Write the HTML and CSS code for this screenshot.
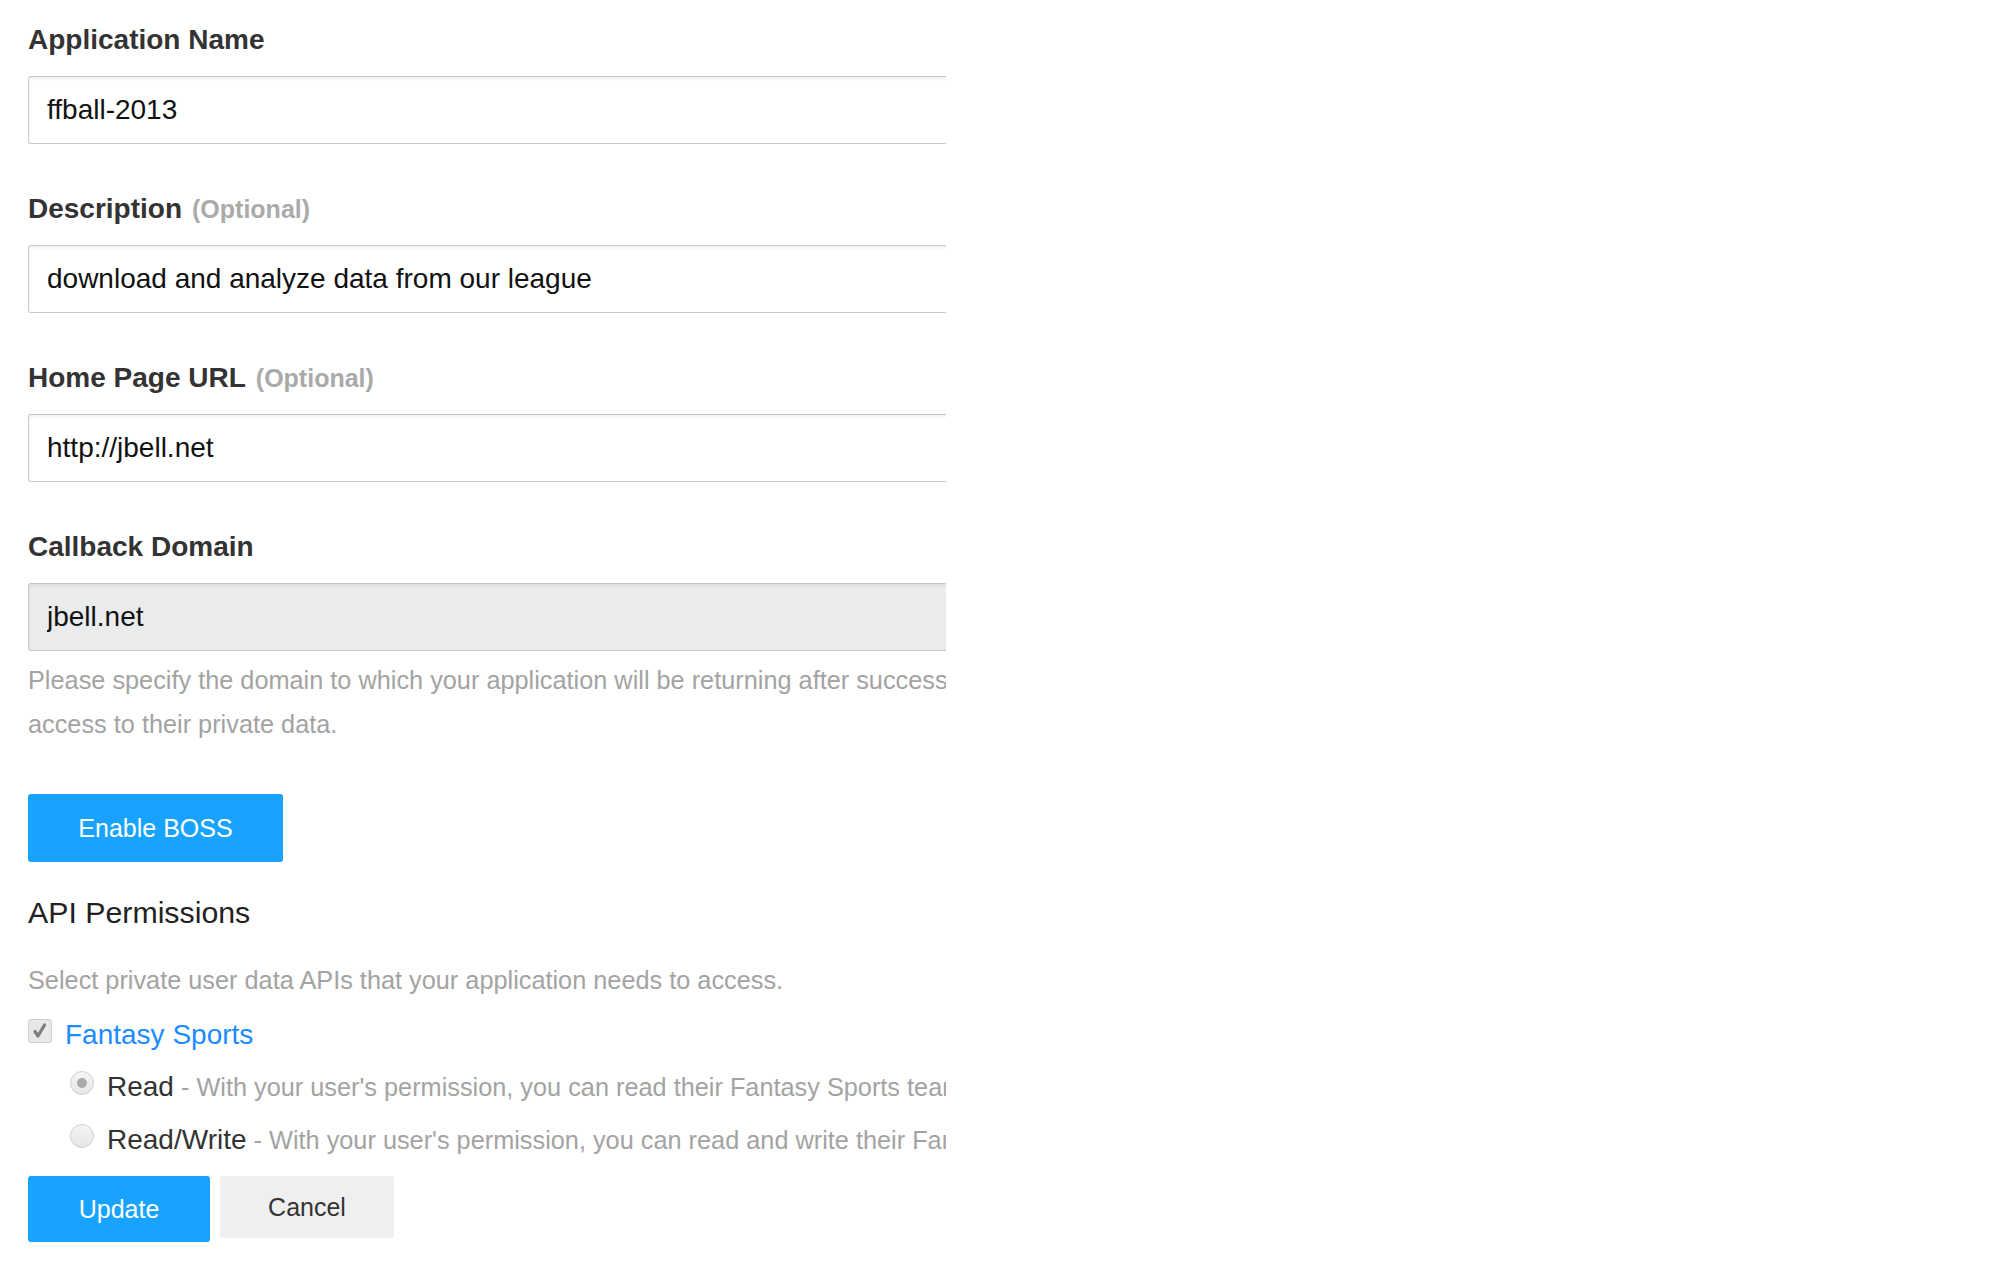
FILE: index.html
```html
<!DOCTYPE html>
<html lang="en">
<head>
<meta charset="utf-8">
<title>Edit Application</title>
<link rel="stylesheet" href="styles.css">
</head>
<body>
<div class="clip">
  <form class="form">
    <div class="field">
      <label class="label">Application Name</label>
      <input class="input" type="text" value="ffball-2013">
    </div>
    <div class="field">
      <label class="label">Description<span class="opt">(Optional)</span></label>
      <input class="input" type="text" value="download and analyze data from our league">
    </div>
    <div class="field">
      <label class="label">Home Page URL<span class="opt">(Optional)</span></label>
      <input class="input" type="text" value="http://jbell.net">
    </div>
    <div class="field last">
      <label class="label">Callback Domain</label>
      <input class="input readonly" type="text" value="jbell.net" readonly>
      <p class="help">Please specify the domain to which your application will be returning after successfully authenticating your users and obtaining<br>access to their private data.</p>
    </div>

    <button type="button" class="btn btn-primary btn-boss">Enable BOSS</button>

    <h3 class="section-title">API Permissions</h3>
    <p class="section-help">Select private user data APIs that your application needs to access.</p>

    <div class="check-row">
      <span class="checkbox"><svg viewBox="0 0 24 24" width="24" height="24"><path d="M7 12.5 L10 17 L16.5 6" fill="none" stroke="#7d7d7d" stroke-width="3.2" stroke-linecap="round" stroke-linejoin="round"/></svg></span>
      <span class="check-label">Fantasy Sports</span>
    </div>
    <div class="radio-row">
      <span class="radio checked"></span>
      <span class="radio-label">Read</span><span class="radio-desc"> - With your user's permission, you can read their Fantasy Sports teams, leagues, players and standings.</span>
    </div>
    <div class="radio-row">
      <span class="radio"></span>
      <span class="radio-label">Read/Write</span><span class="radio-desc"> - With your user's permission, you can read and write their Fantasy Sports teams, rosters and transactions.</span>
    </div>

    <div class="actions">
      <button type="button" class="btn btn-primary btn-update">Update</button>
      <button type="button" class="btn btn-cancel">Cancel</button>
    </div>
  </form>
</div>
</body>
</html>
```
FILE: styles.css
```css
html, body {
  margin: 0;
  padding: 0;
  background: #fff;
}
body {
  font-family: "Liberation Sans", Arial, sans-serif;
  color: #333;
}
.clip {
  width: 946px;
  overflow: hidden;
}
.form {
  width: 1300px;
  padding: 23px 0 0 28px;
  box-sizing: border-box;
}
.field {
  display: flex;
  flex-direction: column;
  align-items: flex-start;
  margin-bottom: 48px;
}
.field.last {
  margin-bottom: 0;
}
.label {
  display: block;
  font-size: 28px;
  line-height: 34px;
  font-weight: bold;
  color: #333;
  margin-bottom: 19px;
}
.opt {
  font-size: 25px;
  color: #aaa;
  margin-left: 10px;
}
.input {
  width: 1200px;
  height: 68px;
  box-sizing: border-box;
  border: 1px solid #c9c9c9;
  border-top-color: #c4c4c4;
  border-radius: 3px;
  box-shadow: inset 0 2px 3px rgba(0, 0, 0, 0.06);
  padding: 0 18px;
  margin: 0;
  font-family: "Liberation Sans", Arial, sans-serif;
  font-size: 28px;
  color: #111;
  background: #fff;
  outline: none;
}
.input.readonly {
  background: #e9ebec;
}
.help {
  margin: 7px 0 0;
  font-size: 25.3px;
  line-height: 44px;
  color: #a3a3a3;
  white-space: nowrap;
}
.btn {
  font-family: "Liberation Sans", Arial, sans-serif;
  font-size: 25px;
  border: none;
  border-radius: 3px;
  padding: 0;
  cursor: pointer;
}
.btn-primary {
  background: #17a3ff;
  color: #fff;
}
.btn-boss {
  display: block;
  width: 255px;
  height: 68px;
  margin-top: 48px;
}
.section-title {
  margin: 31px 0 0;
  font-size: 30.3px;
  line-height: 40px;
  font-weight: normal;
  color: #222;
}
.section-help {
  margin: 25px 0 0;
  font-size: 25.3px;
  line-height: 44px;
  color: #a3a3a3;
}
.check-row {
  display: flex;
  align-items: flex-start;
  margin-top: 15px;
  height: 36px;
}
.checkbox {
  width: 24px;
  height: 24px;
  box-sizing: border-box;
  border: 1px solid #cfcfcf;
  border-radius: 3px;
  background: #e8e8e8;
  margin-top: 2px;
  margin-right: 13px;
  display: flex;
}
.checkbox svg {
  margin: -1px;
}
.check-label {
  font-size: 28px;
  line-height: 36px;
  color: #1a8cff;
}
.radio-row {
  display: flex;
  align-items: flex-start;
  height: 36px;
  margin-top: 16px;
  padding-left: 42px;
  white-space: nowrap;
}
.radio-row + .radio-row {
  margin-top: 17px;
}
.radio {
  flex: none;
  width: 24px;
  height: 24px;
  box-sizing: border-box;
  border: 1px solid #cfcfcf;
  border-radius: 50%;
  background: linear-gradient(#f4f4f4, #e6e6e6);
  margin-top: 2px;
  margin-right: 13px;
  display: flex;
  align-items: center;
  justify-content: center;
}
.radio.checked::after {
  content: "";
  width: 10px;
  height: 10px;
  border-radius: 50%;
  background: #a9a9a9;
}
.radio-label {
  font-size: 28px;
  line-height: 36px;
  color: #333;
}
.radio-desc {
  font-size: 25.3px;
  line-height: 36px;
  color: #a3a3a3;
  white-space: pre;
}
.actions {
  display: flex;
  align-items: flex-start;
  gap: 10px;
  margin-top: 18px;
}
.btn-update {
  width: 182px;
  height: 66px;
}
.btn-cancel {
  width: 174px;
  height: 62px;
  background: #efefef;
  color: #333;
}
```
